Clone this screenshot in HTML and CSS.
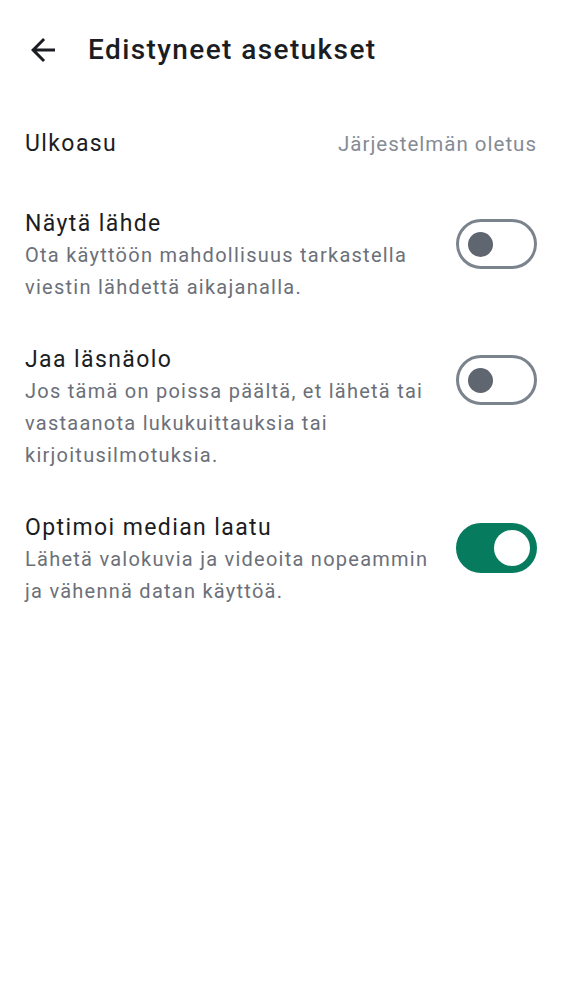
FILE: index.html
```html
<!DOCTYPE html>
<html lang="fi">
<head>
<meta charset="utf-8">
<title>Edistyneet asetukset</title>
<link rel="stylesheet" href="styles.css">
</head>
<body>
<header class="topbar">
  <button class="back" aria-label="Takaisin">
    <svg viewBox="4 4 16 16" width="24" height="24"><path d="M20 11H7.83l5.59-5.59L12 4l-8 8 8 8 1.41-1.41L7.83 13H20v-2z" fill="currentColor"/></svg>
  </button>
  <h1 class="title">Edistyneet asetukset</h1>
</header>
<main class="list">
  <div class="row-simple">
    <span class="item-title">Ulkoasu</span>
    <span class="value">Järjestelmän oletus</span>
  </div>
  <div class="item">
    <div class="text">
      <div class="item-title">Näytä lähde</div>
      <div class="item-sub">Ota käyttöön mahdollisuus tarkastella viestin lähdettä aikajanalla.</div>
    </div>
    <span class="switch"><span class="knob"></span></span>
  </div>
  <div class="item">
    <div class="text">
      <div class="item-title">Jaa läsnäolo</div>
      <div class="item-sub">Jos tämä on poissa päältä, et lähetä tai vastaanota lukukuittauksia tai kirjoitusilmotuksia.</div>
    </div>
    <span class="switch"><span class="knob"></span></span>
  </div>
  <div class="item">
    <div class="text">
      <div class="item-title">Optimoi median laatu</div>
      <div class="item-sub">Lähetä valokuvia ja videoita nopeammin ja vähennä datan käyttöä.</div>
    </div>
    <span class="switch on"><span class="knob"></span></span>
  </div>
</main>
</body>
</html>
```
FILE: styles.css
```css
* { box-sizing: border-box; }
html, body { margin: 0; padding: 0; background: #ffffff; }
body {
  font-family: Roboto, "Noto Sans", sans-serif;
  color: #1b1d22;
  width: 562px;
}
.topbar {
  height: 101px;
  display: flex;
  align-items: center;
  padding-left: 31px;
  padding-bottom: 1px;
}
.back {
  border: 0;
  background: none;
  padding: 0;
  width: 24px;
  height: 24px;
  color: #1b1d22;
  display: flex;
}
.title {
  margin: 0 0 0 33px;
  font-size: 28px;
  font-weight: 500;
  line-height: 34px;
  letter-spacing: 1.4px;
}
.list { padding: 0 25px; }
.row-simple {
  display: flex;
  justify-content: space-between;
  align-items: center;
  padding: 26px 0;
  height: 86px;
}
.item-title {
  font-size: 23px;
  line-height: 34px;
  letter-spacing: 1.4px;
  color: #1b1d22;
}
.value {
  font-size: 20.5px;
  letter-spacing: 1px;
  color: #858b94;
}
.item {
  display: flex;
  align-items: flex-start;
  gap: 24px;
  padding: 20px 0 20px;
}
.text { flex: 1; min-width: 0; }
.item-sub {
  margin-top: -2px;
  font-size: 20px;
  line-height: 32px;
  letter-spacing: 1.25px;
  color: #6b7079;
}
.switch {
  flex: 0 0 auto;
  margin-top: 12px;
  width: 81px;
  height: 50px;
  border: 3px solid #7b838c;
  border-radius: 25px;
  display: flex;
  align-items: center;
  padding-left: 9px;
}
.knob {
  width: 25px;
  height: 25px;
  border-radius: 50%;
  background: #5f6670;
}
.switch.on {
  background: #067b5e;
  border-color: #067b5e;
  justify-content: flex-end;
  padding: 0 4px 0 0;
}
.switch.on .knob {
  width: 36px;
  height: 36px;
  background: #ffffff;
}
```
